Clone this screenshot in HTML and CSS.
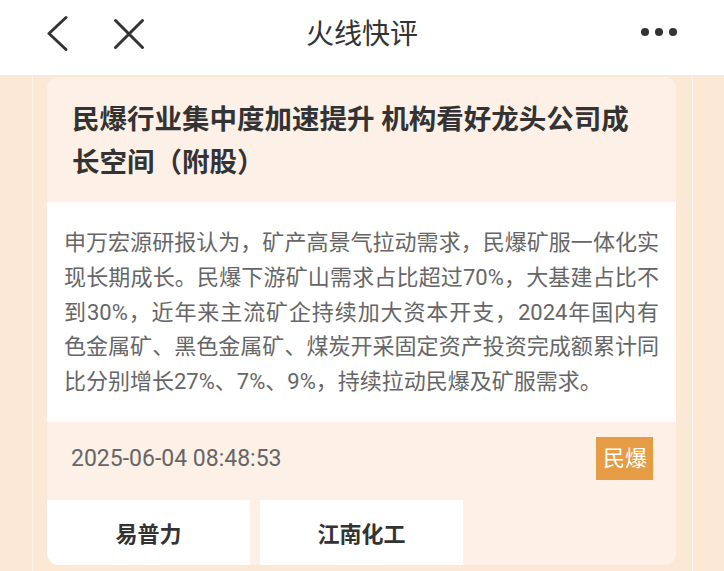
FILE: index.html
```html
<!DOCTYPE html>
<html lang="zh-CN">
<head>
    <meta charset="UTF-8">
    <meta name="viewport" content="width=device-width, initial-scale=1.0">
    <title>火线快评</title>
    <link rel="stylesheet" href="styles.css">
</head>
<body>
    <div class="topbar">
        <div class="nav-left">
            <svg class="icon-back" width="24" height="36" viewBox="0 0 24 36">
                <path d="M21 2.5 L4 18.5 L21 34.5" fill="none" stroke="#333" stroke-width="3" stroke-linecap="round" stroke-linejoin="round"/>
            </svg>
            <svg class="icon-close" width="32" height="32" viewBox="0 0 32 32">
                <path d="M2.5 2.5 L29.5 29.5 M29.5 2.5 L2.5 29.5" fill="none" stroke="#333" stroke-width="3" stroke-linecap="round"/>
            </svg>
        </div>
        <div class="nav-title">火线快评</div>
        <div class="nav-right">
            <svg width="38" height="10" viewBox="0 0 38 10">
                <circle cx="5" cy="5" r="4" fill="#333"/>
                <circle cx="19" cy="5" r="4" fill="#333"/>
                <circle cx="33" cy="5" r="4" fill="#333"/>
            </svg>
        </div>
    </div>

    <div class="main">
        <div class="rail">
            <div class="card">
                <h2 class="card-title">民爆行业集中度加速提升 机构看好龙头公司成长空间（附股）</h2>
                <div class="card-body">申万宏源研报认为，矿产高景气拉动需求，民爆矿服一体化实现长期成长。民爆下游矿山需求占比超过70%，大基建占比不到30%，近年来主流矿企持续加大资本开支，2024年国内有色金属矿、黑色金属矿、煤炭开采固定资产投资完成额累计同比分别增长27%、7%、9%，持续拉动民爆及矿服需求。</div>
                <div class="card-foot">
                    <div class="meta">
                        <span class="time">2025-06-04 08:48:53</span>
                        <span class="tag">民爆</span>
                    </div>
                    <div class="stocks">
                        <div class="stock">易普力</div>
                        <div class="stock">江南化工</div>
                    </div>
                </div>
            </div>
        </div>
    </div>
</body>
</html>
```

FILE: styles.css
```css
body {
    margin: 0;
    background-color: #fbe9d6;
    font-family: Roboto, "Noto Sans CJK SC", sans-serif;
    color: #333;
}
.topbar {
    height: 75px;
    background-color: #fff;
    display: grid;
    grid-template-columns: 1fr auto 1fr;
    align-items: center;
}
.nav-left {
    display: flex;
    align-items: center;
    padding-left: 45px;
    gap: 44px;
}
.icon-back {
    margin-top: -9px;
}
.icon-close {
    margin-top: -8px;
}
.nav-title {
    font-size: 28px;
    color: #333;
    margin-top: -12px;
}
.nav-right {
    display: flex;
    justify-content: flex-end;
    padding-right: 46px;
    margin-top: -12px;
}
.main {
    padding: 0 31px 0 32px;
}
.rail {
    border-left: 1px solid #fdf3ea;
    border-right: 1px solid #fdf3ea;
    padding: 2px 16px 6px 14px;
}
.card {
    background-color: #fdf0e6;
    border-radius: 12px;
    overflow: hidden;
}
.card-title {
    margin: 0;
    padding: 21px 34px 18px 25px;
    font-size: 27.5px;
    line-height: 43px;
    font-weight: bold;
    color: #333;
}
.card-body {
    background-color: #fff;
    padding: 24px 17px 22px 17px;
    font-size: 22px;
    line-height: 34.75px;
    color: #666;
    text-align: justify;
}
.meta {
    display: flex;
    justify-content: space-between;
    align-items: center;
    padding: 15px 23px 0 24px;
}
.time {
    font-size: 23px;
    color: #666;
}
.tag {
    background-color: #e59c44;
    color: #fff;
    font-size: 22px;
    line-height: 43px;
    padding: 0 6px 0 7px;
}
.stocks {
    display: flex;
    gap: 10px;
    margin-top: 20px;
}
.stock {
    width: 203px;
    height: 65px;
    background-color: #fff;
    font-size: 22px;
    font-weight: bold;
    color: #333;
    display: flex;
    align-items: center;
    justify-content: center;
}
```
